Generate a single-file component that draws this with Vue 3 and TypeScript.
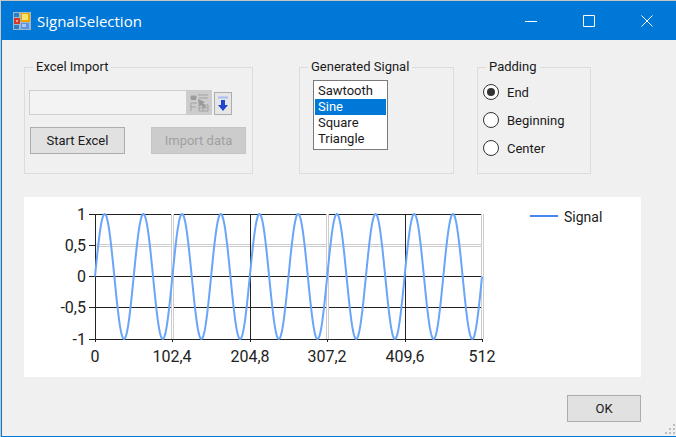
<script setup lang="ts">
import { ref } from 'vue'

const signals: string[] = ['Sawtooth', 'Sine', 'Square', 'Triangle']
const paddings: string[] = ['End', 'Beginning', 'Center']
const selectedSignal = ref<string>('Sine')
const padding = ref<string>('End')
const range = ref<string>('')

// Plot area inside the chart's 617 x 180 view box
const plot = { left: 71, right: 458, top: 17, bottom: 142 }
const middle = (plot.top + plot.bottom) / 2
const amplitude = (plot.bottom - plot.top) / 2
const cycles = 10

const wave: string = Array.from({ length: 513 }, (_, i) => {
  const x = plot.left + ((plot.right - plot.left) * i) / 512
  const y = middle - amplitude * Math.sin((2 * Math.PI * cycles * i) / 512)
  return `${x.toFixed(2)},${y.toFixed(2)}`
}).join(' ')

interface Tick {
  at: number
  label: string
  light: boolean
}

const yTicks: Tick[] = [
  { at: 17, label: '1', light: false },
  { at: 48, label: '0,5', light: true },
  { at: 79, label: '0', light: false },
  { at: 110, label: '-0,5', light: false },
  { at: 142, label: '-1', light: false },
]
const xTicks: Tick[] = [
  { at: 71, label: '0', light: false },
  { at: 148, label: '102,4', light: true },
  { at: 226, label: '204,8', light: false },
  { at: 303, label: '307,2', light: true },
  { at: 381, label: '409,6', light: false },
  { at: 458, label: '512', light: true },
]
</script>

<template>
  <div class="window">
    <header class="titlebar">
      <svg class="app-icon" width="18" height="18" viewBox="0 0 18 18" aria-hidden="true">
        <rect width="18" height="18" fill="#9fb9cc" />
        <rect x="1" y="1" width="5" height="4" fill="#2d7fc4" />
        <rect x="1" y="6" width="6" height="6" fill="#cf3a2c" />
        <rect x="3" y="8" width="2" height="2" fill="#f2a08c" />
        <rect x="8" y="1" width="9" height="9" fill="#e8a800" />
        <rect x="9" y="2" width="6" height="6" fill="#ffe06a" />
        <rect x="1" y="13" width="5" height="4" fill="#2d7fc4" />
        <rect x="8" y="11" width="8" height="6" fill="#5e93e6" />
        <rect x="9" y="12" width="4" height="3" fill="#a9c8f8" />
      </svg>
      <h1 class="title">SignalSelection</h1>
      <div class="controls">
        <button class="control" type="button" aria-label="Minimize">
          <svg width="12" height="12" viewBox="0 0 12 12"><path d="M0 6.5H12" /></svg>
        </button>
        <button class="control" type="button" aria-label="Maximize">
          <svg width="12" height="12" viewBox="0 0 12 12"><path d="M.5 .5H11.5V11.5H.5Z" /></svg>
        </button>
        <button class="control" type="button" aria-label="Close">
          <svg width="12" height="12" viewBox="0 0 12 12"><path d="M.5 .5L11.5 11.5M11.5 .5L.5 11.5" /></svg>
        </button>
      </div>
    </header>

    <main class="body">
      <div class="groups">
        <fieldset class="group import">
          <legend>Excel Import</legend>
          <div class="range-row">
            <input v-model="range" class="range" type="text" aria-label="Excel range" disabled />
            <button class="sheet" type="button" aria-label="Pick range" disabled>
              <svg width="19" height="19" viewBox="0 0 19 19">
                <path d="M1 3H6V6H1ZM8 2H18M9 5H18M1 10V18M1 10H7M1 14H6M9 12V18M9 12H18V18H9M13 12V18M9 15H18" fill="none" stroke="#a2a2a2" />
                <path d="M1 3H6V7H1ZM8 6L15 9L13 10L16 14L14 15L11 12L9 13Z" fill="#9a9a9a" />
              </svg>
            </button>
            <button class="fetch" type="button" aria-label="Fetch">
              <svg width="12" height="16" viewBox="0 0 12 16">
                <path d="M1 1.5H11" stroke="#a9bdf0" stroke-width="2" />
                <path d="M4 4H8V9H11L6 15L1 9H4Z" fill="#1f46cc" />
              </svg>
            </button>
          </div>
          <div class="button-row">
            <button class="button" type="button">Start Excel</button>
            <button class="button" type="button" disabled>Import data</button>
          </div>
        </fieldset>

        <fieldset class="group signal">
          <legend>Generated Signal</legend>
          <select v-model="selectedSignal" class="list" size="4" aria-label="Generated Signal">
            <option v-for="s in signals" :key="s" :value="s">{{ s }}</option>
          </select>
        </fieldset>

        <fieldset class="group padding">
          <legend>Padding</legend>
          <div class="radios">
            <label v-for="p in paddings" :key="p" class="radio">
              <input v-model="padding" type="radio" name="padding" :value="p" />
              <span>{{ p }}</span>
            </label>
          </div>
        </fieldset>
      </div>

      <svg class="chart" viewBox="0 0 617 180" role="img" aria-label="Signal">
        <g v-for="t in yTicks" :key="'y' + t.label">
          <template v-if="t.light">
            <rect :x="plot.left" :y="t.at - 1" :width="plot.right - plot.left" height="3" class="soft" />
            <rect :x="plot.left" :y="t.at" :width="plot.right - plot.left" height="1" class="gap" />
          </template>
          <rect v-else :x="plot.left" :y="t.at" :width="plot.right - plot.left" height="1" class="line" />
          <rect :x="plot.left - 6" :y="t.at" width="6" height="1" class="line" />
          <text class="tick" :x="plot.left - 9" :y="t.at + 6" text-anchor="end">{{ t.label }}</text>
        </g>
        <g v-for="t in xTicks" :key="'x' + t.label">
          <template v-if="t.light">
            <rect :x="t.at - 1" :y="plot.top" width="3" :height="plot.bottom - plot.top" class="soft" />
            <rect :x="t.at" :y="plot.top" width="1" :height="plot.bottom - plot.top" class="gap" />
          </template>
          <rect v-else :x="t.at" :y="plot.top" width="1" :height="plot.bottom - plot.top" class="line" />
          <rect :x="t.at" :y="plot.bottom" width="1" height="3" class="line" />
          <text class="tick" :x="t.at" :y="plot.bottom + 23" text-anchor="middle">{{ t.label }}</text>
        </g>
        <polyline class="wave" :points="wave" />
        <path class="key" d="M506 19H534" />
        <text class="series" x="540" y="25">Signal</text>
      </svg>

      <div class="footer">
        <button class="button ok" type="button">OK</button>
      </div>
    </main>

    <svg class="grip" width="11" height="11" viewBox="0 0 11 11" aria-hidden="true">
      <path d="M8 0h2v2h-2zM4 4h2v2h-2zM8 4h2v2h-2zM0 8h2v2h-2zM4 8h2v2h-2zM8 8h2v2h-2z" fill="#bcbcbc" />
    </svg>
  </div>
</template>

<style>
body {
  margin: 0;
}
</style>

<style scoped>
.window {
  position: relative;
  box-sizing: border-box;
  min-height: 100vh;
  border-top: 1px solid #c8c4c4;
  border-left: 1px solid #c8c8c8;
  background: #f0f0f0;
  box-shadow: inset 1px 0 #0078d7, inset 0 -1px #0078d7;
  color: #1a1a1a;
  font-family: Roboto, 'Liberation Sans', sans-serif;
  font-size: 13px;
}

.titlebar {
  display: flex;
  align-items: center;
  height: 39px;
  padding-left: 12px;
  background: #0078d7;
}

.title {
  flex: 1;
  margin: 0 0 0 6px;
  color: #fff;
  font: 400 15px/20px 'Open Sans', 'Noto Sans', sans-serif;
}

.controls {
  display: flex;
}

.control {
  display: grid;
  place-items: center;
  width: 58px;
  height: 39px;
  padding: 0;
  border: 0;
  background: none;
}

.control path {
  fill: none;
  stroke: #fff;
}

.body {
  padding: 18px 35px 14px 23px;
}

.groups {
  display: grid;
  grid-template-columns: 229fr 46fr 155fr 23fr 114fr 50fr;
}

.group {
  box-sizing: border-box;
  height: 116px;
  min-width: 0;
  margin: 0;
  padding: 0 4px;
  border: 1px solid #dcdcdc;
}

.import {
  grid-column: 1;
}

.signal {
  grid-column: 3;
}

.padding {
  grid-column: 5;
}

.group legend {
  height: 18px;
  margin-left: 4px;
  padding: 0 3px;
  line-height: 18px;
}

.range-row {
  display: flex;
  align-items: flex-end;
  padding-top: 14px;
}

.range {
  box-sizing: border-box;
  flex: 1;
  min-width: 0;
  height: 25px;
  border: 1px solid #cfcfcf;
  background: #f3f3f3;
}

.sheet {
  display: grid;
  place-items: center;
  width: 25px;
  height: 25px;
  padding: 0;
  border: 0;
  background: #cccccc;
}

.fetch {
  box-sizing: border-box;
  display: grid;
  place-items: center;
  width: 18px;
  height: 23px;
  margin: 0 16px 0 2px;
  padding: 0;
  border: 1px solid #adadad;
  background: #e6e6e6;
}

.button-row {
  display: flex;
  justify-content: space-between;
  padding: 12px 2px 0 1px;
}

.button {
  box-sizing: border-box;
  width: 95px;
  height: 27px;
  padding: 0;
  border: 1px solid #adadad;
  background: #e1e1e1;
  color: #1a1a1a;
  font: inherit;
}

.button:disabled {
  border-color: #c6c6c6;
  background: #cccccc;
  color: #a0a0a0;
}

.list {
  display: block;
  box-sizing: border-box;
  width: 75px;
  height: 70px;
  margin: 4px 0 0 9px;
  padding: 2px 1px;
  overflow: hidden;
  border: 1px solid #7a7a7a;
  border-radius: 0;
  outline: 0;
  background: #fff;
  color: #1a1a1a;
  font: inherit;
}

.list option {
  min-height: 16px;
  height: 16px;
  padding: 0 3px;
  line-height: 16px;
}

.list option:checked {
  background: #0078d7 linear-gradient(#0078d7, #0078d7);
  color: #fff;
}

.radios {
  display: flex;
  flex-direction: column;
  gap: 12px;
  padding: 8px 0 0 1px;
}

.radio {
  display: flex;
  align-items: center;
  gap: 8px;
  height: 16px;
}

.radio input {
  display: grid;
  flex: none;
  place-items: center;
  box-sizing: border-box;
  width: 16px;
  height: 16px;
  margin: 0;
  appearance: none;
  border: 1px solid #333;
  border-radius: 50%;
  background: #fff;
}

.radio input:checked::before {
  width: 8px;
  height: 8px;
  border-radius: 50%;
  background: #333;
  content: '';
}

.chart {
  display: block;
  width: 100%;
  margin-top: 23px;
  background: #fff;
}

.line {
  fill: #222;
}

.soft {
  fill: #cdcdcd;
}

.gap {
  fill: #fff;
}

.wave {
  fill: none;
  stroke: #69a5f8;
  stroke-width: 2;
}

.key {
  stroke: #4a86f0;
  stroke-width: 2;
}

.tick {
  fill: #222;
  font-size: 16px;
}

.series {
  fill: #222;
  font-size: 14px;
}

.footer {
  display: flex;
  justify-content: flex-end;
  padding-top: 18px;
}

.ok {
  width: 74px;
}

.grip {
  position: absolute;
  right: 0;
  bottom: 2px;
}
</style>
